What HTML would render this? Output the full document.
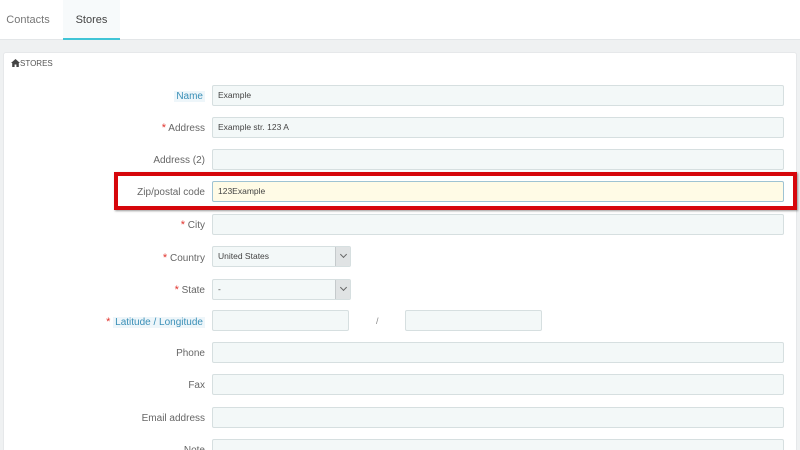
<!DOCTYPE html>
<html><head><meta charset="utf-8"><style>
*{box-sizing:border-box;margin:0;padding:0}
html,body{width:800px;height:450px;overflow:hidden}
body{background:#eff1f2;font-family:"Liberation Sans",sans-serif;font-size:9px;color:#555;position:relative}
.top{position:absolute;left:0;top:0;width:800px;height:40px;background:#fff;border-bottom:1px solid #e3e6e8}
.tab{position:absolute;top:0;height:40px;line-height:40px;font-size:11px;color:#777}
.tab.act{background:#f7fafb;color:#444;border-bottom:2px solid #40c4d6}
.panel{position:absolute;left:3px;top:52px;width:794px;height:420px;background:#fff;border:1px solid #e6e8ea;border-radius:3px}
.ph{position:absolute;left:7px;top:6px;font-size:8px;color:#555}
.lab{position:absolute;right:595px;font-size:10px;color:#666;text-align:right;white-space:nowrap}
.lab .s{color:#e1342e;font-size:11px}
.lab.b{color:#3a8fb7;background:#eef6fa;padding:0 2px}
.in{position:absolute;left:212px;width:572px;height:21px;background:#f3f8f8;border:1px solid #d6dfe0;border-radius:2px;font-size:8.5px;color:#444;padding:0 5px;line-height:19px}
.sel{width:139px}
.sel:after{content:"";position:absolute;right:0;top:0;width:14px;height:19px;background:#e0e3e4;border-left:1px solid #c5cacc}
.chev{position:absolute;right:4px;top:5px;width:5px;height:5px;border-right:1px solid #666;border-bottom:1px solid #666;transform:rotate(45deg);z-index:2}
.red{position:absolute;left:114px;top:172px;width:683px;height:38px;border:4px solid #d6060b;box-shadow:1px 1px 2px rgba(0,0,0,.4)}
</style></head><body>
<div class="top">
<div class="tab" style="left:0;width:56px;text-align:center">Contacts</div>
<div class="tab act" style="left:63px;width:57px;text-align:center">Stores</div>
</div>
<div class="panel"><div class="ph"><svg width="9" height="8" viewBox="0 0 9 8" style="vertical-align:-1px"><path d="M4.5 0L0 4h1.2v4h2.4V5.5h1.8V8h2.4V4H9z" fill="#444"/></svg>STORES</div></div>

<div class="lab b" style="top:91px">Name</div>
<div class="in" style="top:85px">Example</div>
<div class="lab" style="top:122px"><span class="s">*</span> Address</div>
<div class="in" style="top:117px">Example str. 123 A</div>
<div class="lab" style="top:155px">Address (2)</div>
<div class="in" style="top:149px"></div>
<div class="lab" style="top:187px">Zip/postal code</div>
<div class="in" style="top:181px;background:#fffbe6;border-color:#9fc3d3">123Example</div>
<div class="red"></div>
<div class="lab" style="top:219px"><span class="s">*</span> City</div>
<div class="in" style="top:214px"></div>
<div class="lab" style="top:252px"><span class="s">*</span> Country</div>
<div class="in sel" style="top:246px">United States<span class="chev"></span></div>
<div class="lab" style="top:284px"><span class="s">*</span> State</div>
<div class="in sel" style="top:279px">-<span class="chev"></span></div>
<div class="lab" style="top:316px"><span class="s">*</span> <span style="color:#3a8fb7;background:#eef6fa;padding:0 2px">Latitude / Longitude</span></div>
<div class="in" style="top:310px;width:137px"></div>
<div style="position:absolute;left:376px;top:316px;font-size:9px;color:#888">/</div>
<div class="in" style="top:310px;left:405px;width:137px"></div>
<div class="lab" style="top:348px">Phone</div>
<div class="in" style="top:342px"></div>
<div class="lab" style="top:380px">Fax</div>
<div class="in" style="top:374px"></div>
<div class="lab" style="top:413px">Email address</div>
<div class="in" style="top:407px"></div>
<div class="lab" style="top:445px">Note</div>
<div class="in" style="top:439px"></div>
</body></html>
